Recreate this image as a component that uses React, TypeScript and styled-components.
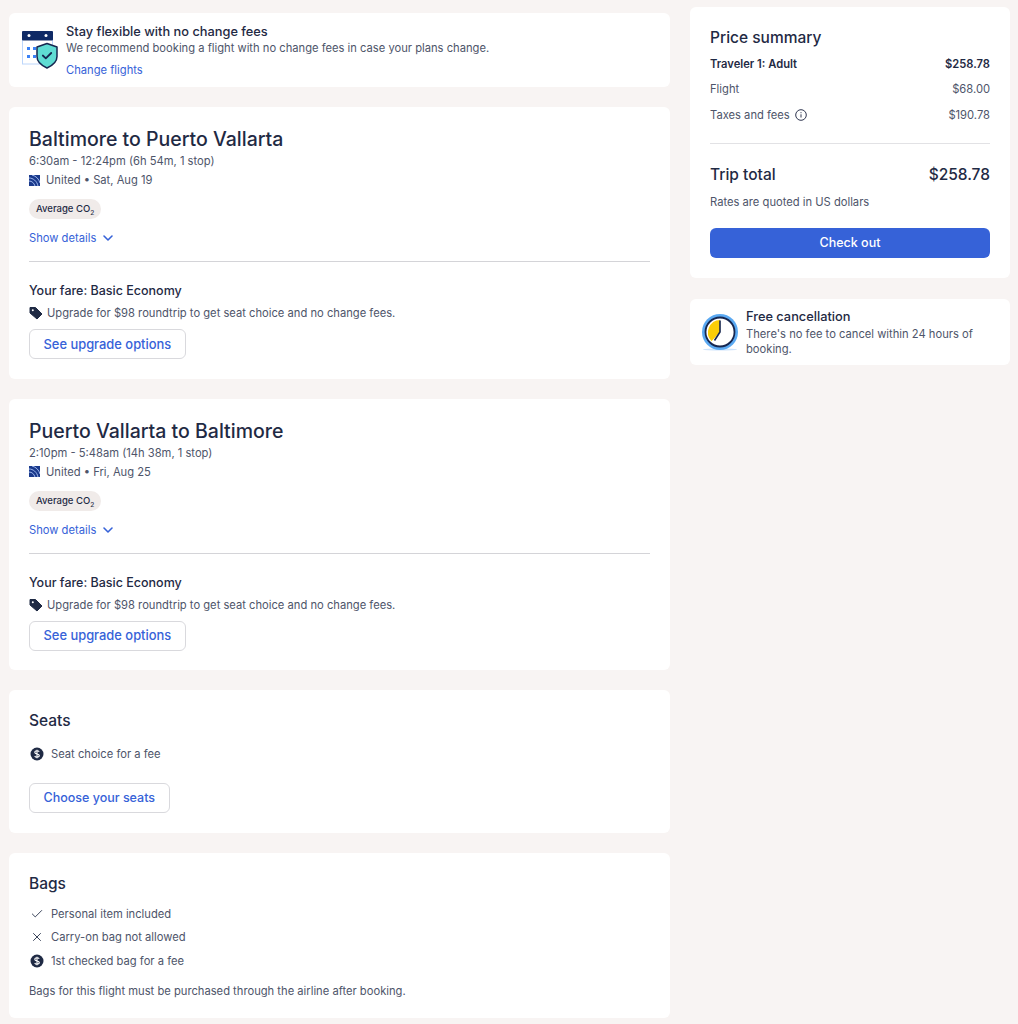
import React from 'react';
import styled, { createGlobalStyle } from 'styled-components';
import { ChevronDown, Check, X } from 'lucide-react';

const GlobalStyle = createGlobalStyle`
    html, body {
        margin: 0;
        padding: 0;
        background: #f8f4f3;
    }
    body {
        font-family: Inter, 'Noto Sans', sans-serif;
        color: #1f2a44;
    }
    * {
        box-sizing: border-box;
    }
`;

const Page = styled.div`
    display: flex;
    align-items: flex-start;
    gap: 20px;
    width: 1018px;
    height: 1024px;
    overflow: hidden;
    padding: 7px 8px 0 9px;
`;

const LeftColumn = styled.div`
    display: flex;
    flex-direction: column;
    gap: 20px;
    width: 661px;
    padding-top: 6px;
`;

const RightColumn = styled.div`
    display: flex;
    flex-direction: column;
    gap: 21px;
    width: 320px;
`;

const Card = styled.section`
    background: #fff;
    border-radius: 6px;
    padding: 20px;
`;

const NoticeCard = styled(Card)<{ $height: number; $top: number }>`
    display: flex;
    gap: 8px;
    height: ${(p) => p.$height}px;
    padding: ${(p) => p.$top}px 12px 0;
`;

const NoticeBody = styled.div`
    display: flex;
    flex-direction: column;
`;

const NoticeTitle = styled.div<{ $lineHeight: number }>`
    font-size: 12.8px;
    line-height: ${(p) => p.$lineHeight}px;
    font-weight: 500;
`;

const BodyText = styled.div`
    font-size: 11.2px;
    line-height: 15px;
    color: #4e556a;
`;

const NoticeLink = styled.a`
    font-size: 11.2px;
    line-height: 16px;
    color: #3662d8;
    margin-top: 6px;
`;

const FlightCardBox = styled(Card)`
    padding-bottom: 19.5px;
`;

const BagsCard = styled(Card)`
    padding-bottom: 19px;
`;

const FlightTitle = styled.h2`
    margin: 0 0 1px;
    font-size: 19.5px;
    line-height: 24px;
    font-weight: 500;
`;

const MetaText = styled(BodyText)`
    line-height: 18px;
`;

const AirlineRow = styled(MetaText)`
    display: flex;
    align-items: center;
    gap: 6px;
    margin-top: 1px;
`;

const Badge = styled.span`
    align-self: flex-start;
    display: inline-block;
    margin-top: 10px;
    height: 20px;
    padding: 0 7px;
    border-radius: 10px;
    background: #f0ebe9;
    font-size: 9.5px;
    line-height: 20px;
    font-weight: 500;
    sub {
        font-size: 6.5px;
        line-height: 0;
    }
`;

const DetailsToggle = styled.div`
    display: flex;
    align-items: center;
    gap: 4px;
    margin-top: 11px;
    font-size: 11.2px;
    line-height: 16px;
    color: #3662d8;
`;

const Divider = styled.hr`
    border: 0;
    border-top: 1px solid #d4d4d8;
    margin: 15px 0 21px;
`;

const FareTitle = styled.div`
    font-size: 12.5px;
    line-height: 16px;
    font-weight: 500;
`;

const UpgradeRow = styled(BodyText)`
    display: flex;
    align-items: center;
    gap: 4px;
    margin-top: 6px;
    line-height: 16px;
`;

const OutlineButton = styled.button`
    display: block;
    height: 30px;
    padding: 0 13.5px;
    margin-top: 8px;
    background: #fff;
    border: 1px solid #d9d9dd;
    border-radius: 6px;
    color: #3662d8;
    font-family: inherit;
    font-size: 12.9px;
    font-weight: 500;
`;

const SectionTitle = styled.h3`
    margin: 0;
    font-size: 15.5px;
    line-height: 22px;
    font-weight: 500;
`;

const IconRows = styled.div<{ $top: number }>`
    display: flex;
    flex-direction: column;
    gap: 7px;
    margin-top: ${(p) => p.$top}px;
`;

const IconRow = styled(BodyText)`
    display: flex;
    align-items: center;
    gap: 7px;
    line-height: 16.5px;
`;

const IconSlot = styled.span`
    display: flex;
    justify-content: center;
    width: 15px;
    color: #1f2a44;
`;

const SeatsButton = styled(OutlineButton)`
    margin-top: 20px;
    font-size: 12.5px;
`;

const BagsNote = styled(BodyText)`
    margin-top: 15px;
`;

const PriceTitle = styled.h3`
    margin: 0 0 2px;
    font-size: 15.5px;
    line-height: 22px;
    font-weight: 500;
`;

const PriceRow = styled.div<{ $strong?: boolean }>`
    display: flex;
    justify-content: space-between;
    align-items: center;
    height: 25.5px;
    font-size: 11.2px;
    font-weight: ${(p) => (p.$strong ? 600 : 400)};
    color: ${(p) => (p.$strong ? '#1f2a44' : '#4e556a')};
`;

const LabelWithIcon = styled.span`
    display: flex;
    align-items: center;
    gap: 5px;
`;

const TotalRow = styled.div`
    display: flex;
    justify-content: space-between;
    font-size: 15.5px;
    line-height: 20px;
    font-weight: 500;
`;

const PriceDivider = styled.hr`
    border: 0;
    border-top: 1px solid #e2e2e5;
    margin: 15px 0 21px;
`;

const RatesNote = styled(BodyText)`
    margin-top: 10px;
`;

const CheckoutButton = styled.button`
    display: block;
    width: 100%;
    height: 30px;
    margin-top: 18px;
    border: 0;
    border-radius: 6px;
    background: #3662d8;
    color: #fff;
    font-family: inherit;
    font-size: 12.5px;
    font-weight: 500;
`;

const PriceCard = styled(Card)`
    height: 271px;
`;

const NoticeIcon = styled.svg<{ $top: number }>`
    flex-shrink: 0;
    margin-top: ${(p) => p.$top}px;
`;

const CalendarShield = () => (
    <NoticeIcon $top={5} width="37" height="41" viewBox="0 0 37 41" fill="none">
        <rect x="1.500" y="6" width="30" height="30" fill="#fff" stroke="#bcd6fb" />
        <rect x="1" y="3" width="31" height="9.500" rx="1" fill="#0f2a66" />
        <circle cx="8" cy="7.500" r="1.500" fill="#fff" />
        <circle cx="25" cy="7.500" r="1.500" fill="#fff" />
        <rect x="6" y="19" width="3" height="3" fill="#3b82f6" />
        <rect x="12" y="19" width="3" height="3" fill="#3b82f6" />
        <rect x="6" y="27" width="3" height="3" fill="#3b82f6" />
        <rect x="12" y="27" width="3" height="3" fill="#3b82f6" />
        <path d="M26 15.500l10 3.500v9.500c0 5.500-4.500 9-10 11.500-5.500-2.500-10-6-10-11.500V19z" fill="#5fdcd3" stroke="#16264f" strokeWidth="1.500" strokeLinejoin="round" />
        <path d="M21.800 27.500l3 2.800 5.400-5.300" stroke="#16264f" strokeWidth="1.800" strokeLinecap="round" strokeLinejoin="round" />
    </NoticeIcon>
);

const ClockIcon = () => (
    <NoticeIcon $top={6} width="36" height="40" viewBox="0 0 36 40" fill="none">
        <ellipse cx="18" cy="36.500" rx="17" ry="1" fill="#cfe4fb" />
        <circle cx="18" cy="19" r="18" fill="#5aa9f2" />
        <circle cx="18" cy="19" r="14.500" fill="#fff" stroke="#16264f" strokeWidth="1.800" />
        <path d="M18 7A12.500 12.500 0 0 0 9.500 28.200L18 19z" fill="#fbce07" />
        <path d="M18 7.500V19L12.500 27.500" stroke="#16264f" strokeWidth="1.600" />
    </NoticeIcon>
);

const UnitedLogo = () => (
    <svg width="11" height="11" viewBox="0 0 11 11" fill="none">
        <rect width="11" height="11" fill="#1a3a8c" />
        <path d="M0 3c4 0 8 3 9 8M0 6c3 0 5 2 6 5M3 0c4 1 7 4 8 8" stroke="#9fb8ee" strokeWidth="1" />
    </svg>
);

const TagIcon = () => (
    <svg width="14" height="14" viewBox="0 0 14 14">
        <path d="M1 1.500h5.500l6.500 6.500-5 5L1 7z" fill="#1f2a44" stroke="#1f2a44" strokeLinejoin="round" />
        <circle cx="3.800" cy="4.200" r="1" fill="#fff" />
    </svg>
);

const DollarIcon = () => (
    <svg width="14" height="14" viewBox="0 0 14 14">
        <circle cx="7" cy="7" r="6.500" fill="#1f2a44" />
        <path d="M9.200 4.800C8.700 4 7.800 3.800 7 3.800c-1.200 0-2.200.6-2.200 1.600 0 2.200 4.500 1 4.500 3.200 0 1-1 1.600-2.300 1.600-.9 0-1.900-.4-2.300-1.200M7 2.700v8.600" stroke="#fff" strokeWidth="1.100" fill="none" />
    </svg>
);

const InfoIcon = () => (
    <svg width="12" height="12" viewBox="0 0 12 12" fill="none" stroke="#2f3650">
        <circle cx="6" cy="6" r="5.300" />
        <path d="M6 5.300v3.200" />
        <path d="M6 3.200v1" />
    </svg>
);

const FlightCard: React.FC<{ title: string; times: string; date: string }> = ({ title, times, date }) => (
    <FlightCardBox>
        <FlightTitle>{title}</FlightTitle>
        <MetaText>{times}</MetaText>
        <AirlineRow>
            <UnitedLogo />
            <span>United • {date}</span>
        </AirlineRow>
        <Badge>Average CO<sub>2</sub></Badge>
        <DetailsToggle>
            Show details
            <ChevronDown size={16} strokeWidth={2.4} />
        </DetailsToggle>
        <Divider />
        <FareTitle>Your fare: Basic Economy</FareTitle>
        <UpgradeRow>
            <TagIcon />
            Upgrade for $98 roundtrip to get seat choice and no change fees.
        </UpgradeRow>
        <OutlineButton>See upgrade options</OutlineButton>
    </FlightCardBox>
);

export default function App() {
    return (
        <Page>
            <GlobalStyle />
            <LeftColumn>
                <NoticeCard $height={74} $top={10}>
                    <CalendarShield />
                    <NoticeBody>
                        <NoticeTitle $lineHeight={18}>Stay flexible with no change fees</NoticeTitle>
                        <BodyText>We recommend booking a flight with no change fees in case your plans change.</BodyText>
                        <NoticeLink>Change flights</NoticeLink>
                    </NoticeBody>
                </NoticeCard>
                <FlightCard
                    title="Baltimore to Puerto Vallarta"
                    times="6:30am - 12:24pm (6h 54m, 1 stop)"
                    date="Sat, Aug 19"
                />
                <FlightCard
                    title="Puerto Vallarta to Baltimore"
                    times="2:10pm - 5:48am (14h 38m, 1 stop)"
                    date="Fri, Aug 25"
                />
                <Card>
                    <SectionTitle>Seats</SectionTitle>
                    <IconRows $top={14}>
                        <IconRow>
                            <IconSlot><DollarIcon /></IconSlot>
                            Seat choice for a fee
                        </IconRow>
                    </IconRows>
                    <SeatsButton>Choose your seats</SeatsButton>
                </Card>
                <BagsCard>
                    <SectionTitle>Bags</SectionTitle>
                    <IconRows $top={11}>
                        <IconRow>
                            <IconSlot><Check size={14} strokeWidth={1.5} /></IconSlot>
                            Personal item included
                        </IconRow>
                        <IconRow>
                            <IconSlot><X size={14} strokeWidth={1.5} /></IconSlot>
                            Carry-on bag not allowed
                        </IconRow>
                        <IconRow>
                            <IconSlot><DollarIcon /></IconSlot>
                            1st checked bag for a fee
                        </IconRow>
                    </IconRows>
                    <BagsNote>Bags for this flight must be purchased through the airline after booking.</BagsNote>
                </BagsCard>
            </LeftColumn>
            <RightColumn>
                <PriceCard>
                    <PriceTitle>Price summary</PriceTitle>
                    <PriceRow $strong>
                        <span>Traveler 1: Adult</span>
                        <span>$258.78</span>
                    </PriceRow>
                    <PriceRow>
                        <span>Flight</span>
                        <span>$68.00</span>
                    </PriceRow>
                    <PriceRow>
                        <LabelWithIcon>Taxes and fees <InfoIcon /></LabelWithIcon>
                        <span>$190.78</span>
                    </PriceRow>
                    <PriceDivider />
                    <TotalRow>
                        <span>Trip total</span>
                        <span>$258.78</span>
                    </TotalRow>
                    <RatesNote>Rates are quoted in US dollars</RatesNote>
                    <CheckoutButton>Check out</CheckoutButton>
                </PriceCard>
                <NoticeCard $height={66} $top={8}>
                    <ClockIcon />
                    <NoticeBody>
                        <NoticeTitle $lineHeight={20}>Free cancellation</NoticeTitle>
                        <BodyText>There's no fee to cancel within 24 hours of booking.</BodyText>
                    </NoticeBody>
                </NoticeCard>
            </RightColumn>
        </Page>
    );
}
